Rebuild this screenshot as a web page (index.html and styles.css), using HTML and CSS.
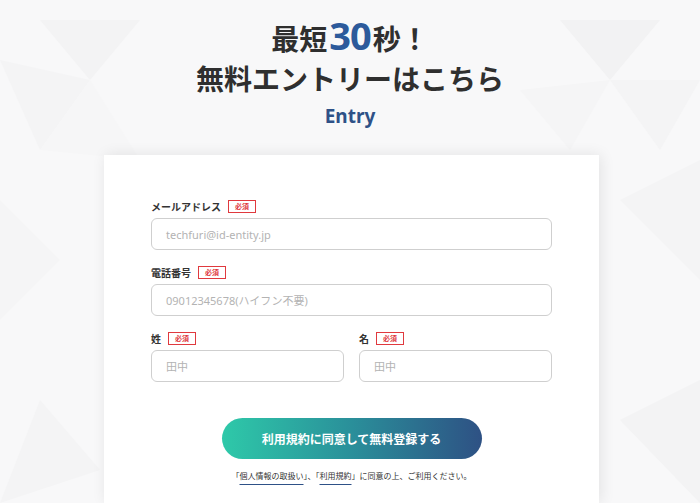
FILE: index.html
```html
<!DOCTYPE html>
<html lang="ja">
<head>
<meta charset="utf-8">
<title>Entry</title>
<link rel="stylesheet" href="styles.css">
</head>
<body>
<div class="page">
  <svg class="bg" width="700" height="503" viewBox="0 0 700 503" aria-hidden="true">
    <polygon points="40,20 140,20 90,80" fill="#f3f3f4"/>
    <polygon points="0,60 90,80 40,150" fill="#f4f4f5"/>
    <polygon points="90,80 140,160 40,150" fill="#f6f6f7"/>
    <polygon points="560,20 660,20 610,80" fill="#f2f2f3"/>
    <polygon points="610,80 700,80 660,150" fill="#f4f4f5"/>
    <polygon points="520,90 610,80 570,150" fill="#f5f5f6"/>
    <polygon points="620,200 700,160 700,280" fill="#f4f4f5"/>
    <polygon points="0,200 60,260 0,320" fill="#f5f5f6"/>
    <polygon points="40,400 100,470 0,503" fill="#f4f4f5"/>
    <polygon points="620,420 700,380 700,503" fill="#f3f3f4"/>
  </svg>
  <header class="hero">
    <h1 class="hero-title">
      <span class="line1">最短<span class="num">30</span>秒！</span>
      <span class="line2">無料エントリーはこちら</span>
    </h1>
    <p class="hero-sub">Entry</p>
  </header>
  <main class="card">
    <div class="field">
      <div class="label"><span>メールアドレス</span><span class="req">必須</span></div>
      <div class="input">techfuri@id-entity.jp</div>
    </div>
    <div class="field">
      <div class="label"><span>電話番号</span><span class="req">必須</span></div>
      <div class="input">09012345678(ハイフン不要)</div>
    </div>
    <div class="row">
      <div class="field">
        <div class="label"><span>姓</span><span class="req">必須</span></div>
        <div class="input">田中</div>
      </div>
      <div class="field">
        <div class="label"><span>名</span><span class="req">必須</span></div>
        <div class="input">田中</div>
      </div>
    </div>
    <div class="actions">
      <button class="submit" type="button">利用規約に同意して無料登録する</button>
      <p class="note">「<a href="#">個人情報の取扱い</a>」、「<a href="#">利用規約</a>」に同意の上、ご利用ください。</p>
    </div>
  </main>
</div>
</body>
</html>
```

FILE: styles.css
```css
* { box-sizing: border-box; }
html, body { margin: 0; padding: 0; }
body {
  width: 700px;
  height: 503px;
  overflow: hidden;
  background: #f8f8f9;
  font-family: "Noto Sans CJK JP", "Noto Sans", sans-serif;
  color: #333;
}
.page {
  position: relative;
  width: 700px;
  height: 503px;
  display: flex;
  flex-direction: column;
  align-items: center;
}
.bg {
  position: absolute;
  left: 0;
  top: 0;
  z-index: 0;
}
.hero {
  position: relative;
  z-index: 1;
  text-align: center;
  padding-top: 15px;
}
.hero-title {
  margin: 0;
  font-size: 28px;
  font-weight: 700;
  line-height: 40px;
  color: #2f2f2f;
  display: flex;
  flex-direction: column;
  align-items: center;
}
.line1 { display: flex; align-items: baseline; }
.num {
  font-family: "Noto Sans", "Open Sans", sans-serif;
  font-size: 38px;
  color: #2c5a9b;
  letter-spacing: -1px;
  margin: 0 2px;
}
.hero-sub {
  margin: 6px 0 0;
  font-family: "Noto Sans", "Open Sans", sans-serif;
  font-size: 19px;
  font-weight: 700;
  color: #2e5187;
  line-height: 24px;
}
.card {
  position: relative;
  z-index: 1;
  margin-top: 27px;
  margin-left: 3px;
  width: 495px;
  flex: 1;
  background: #fff;
  box-shadow: 2px 0 14px rgba(0,0,0,0.09);
  padding: 45px 47px 0;
  display: flex;
  flex-direction: column;
  gap: 16px;
}
.field { display: flex; flex-direction: column; gap: 5px; }
.row .field { flex: 1; }
.label {
  display: flex;
  align-items: center;
  gap: 7px;
  font-size: 10px;
  font-weight: 700;
  color: #333;
  line-height: 13px;
  height: 13px;
}
.req {
  border: 1px solid #e0393e;
  color: #e0393e;
  font-size: 7px;
  font-weight: 700;
  line-height: 11px;
  padding: 0 6px;
}
.input {
  height: 32px;
  border: 1px solid #cfcfcf;
  border-radius: 6px;
  padding: 0 14px;
  display: flex;
  align-items: center;
  font-family: "Noto Sans", "Noto Sans CJK JP", sans-serif;
  font-size: 11px;
  color: #b3b3b3;
}
.row { display: flex; gap: 15px; }
.actions {
  display: flex;
  flex-direction: column;
  align-items: center;
  margin-top: 20px;
  gap: 10px;
}
.submit {
  width: 260px;
  height: 41px;
  border: none;
  border-radius: 21px;
  background: linear-gradient(90deg, #2ec9a9 0%, #2a8f9a 50%, #2e5184 100%);
  color: #fff;
  font-family: "Noto Sans CJK JP", sans-serif;
  font-size: 12px;
  font-weight: 700;
}
.note {
  margin: 0;
  font-size: 8px;
  color: #333;
  line-height: 14px;
}
.note a {
  color: #333;
  text-decoration: underline;
  text-decoration-color: #2e5187;
  text-underline-offset: 5px;
}
```
